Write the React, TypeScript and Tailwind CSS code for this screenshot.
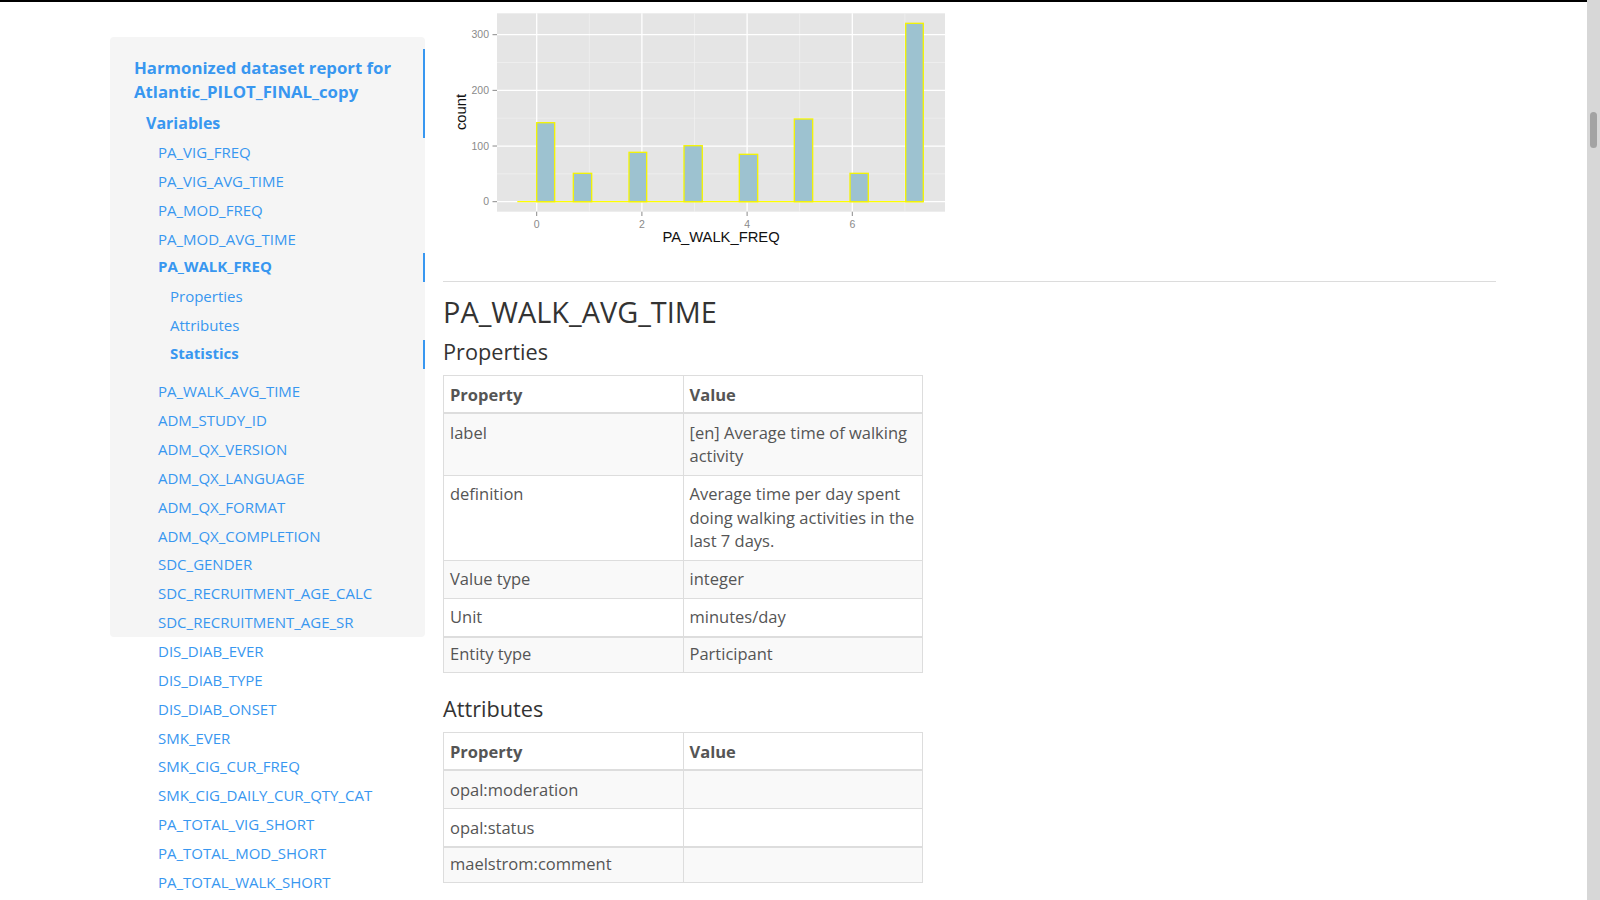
import React from "react";

const BLUE = "text-[#3897f0]";

const topItems = ["PA_VIG_FREQ", "PA_VIG_AVG_TIME", "PA_MOD_FREQ", "PA_MOD_AVG_TIME"];
const restItems = [
  "PA_WALK_AVG_TIME",
  "ADM_STUDY_ID",
  "ADM_QX_VERSION",
  "ADM_QX_LANGUAGE",
  "ADM_QX_FORMAT",
  "ADM_QX_COMPLETION",
  "SDC_GENDER",
  "SDC_RECRUITMENT_AGE_CALC",
  "SDC_RECRUITMENT_AGE_SR",
  "DIS_DIAB_EVER",
  "DIS_DIAB_TYPE",
  "DIS_DIAB_ONSET",
  "SMK_EVER",
  "SMK_CIG_CUR_FREQ",
  "SMK_CIG_DAILY_CUR_QTY_CAT",
  "PA_TOTAL_VIG_SHORT",
  "PA_TOTAL_MOD_SHORT",
  "PA_TOTAL_WALK_SHORT",
];

function NavRow({
  label,
  bold,
  active,
  indent,
  extra = "",
}: {
  label: string;
  bold?: boolean;
  active?: boolean;
  indent: string;
  extra?: string;
}) {
  return (
    <div
      className={`flex h-[28.85px] items-center text-[15px] ${BLUE} ${indent} ${bold ? "font-bold" : ""} ${
        active ? "border-r-2 border-[#3897f0]" : ""
      } ${extra}`}
    >
      {label}
    </div>
  );
}

function Sidebar() {
  return (
    <aside className="w-[315px] shrink-0 pt-[35px]">
      <div className="h-[600px] rounded-[4px] bg-[#f5f5f5] pt-[12px]">
        <div className="border-r-2 border-[#3897f0] pl-[24px] pt-[7px]">
          <div className={`text-[16.8px] font-bold leading-[24px] ${BLUE}`}>
            Harmonized dataset report for
            <br />
            Atlantic_PILOT_FINAL_copy
          </div>
          <div className={`mt-[4px] flex h-[30px] items-center pb-[1px] pl-[12px] text-[16px] font-bold ${BLUE}`}>
            Variables
          </div>
        </div>
        {topItems.map((t) => (
          <NavRow key={t} label={t} indent="pl-[48px]" />
        ))}
        <NavRow label="PA_WALK_FREQ" bold active indent="pl-[48px]" extra="pb-[3px]" />
        <div className="mb-[8.5px]">
          <NavRow label="Properties" indent="pl-[60px]" />
          <NavRow label="Attributes" indent="pl-[60px]" />
          <NavRow label="Statistics" bold active indent="pl-[60px]" extra="pb-[1.5px]" />
        </div>
        {restItems.map((t) => (
          <NavRow key={t} label={t} indent="pl-[48px]" />
        ))}
      </div>
    </aside>
  );
}

const yv = (v: number) => 201.7 - 0.5567 * v;
const xu = (u: number) => 536.7 + 52.6 * u;

const bars = [
  [536.7, 554.7, 122.7],
  [573.3, 591.7, 173.3],
  [629, 646.7, 152.3],
  [684, 702.3, 145.7],
  [739.3, 757.7, 154.3],
  [794.3, 812.7, 119],
  [850, 868.3, 173.3],
  [905.7, 923.3, 23.3],
];

const CHART_FONT = "'Liberation Sans', Arial, sans-serif";

function Chart() {
  return (
    <svg width={510} height={259} viewBox="443 2 510 259" className="block">
      <rect x={497} y={13.3} width={448} height={198.4} fill="#e5e5e5" />
      {[50, 150, 250].map((v) => (
        <line key={v} x1={497} x2={945} y1={yv(v)} y2={yv(v)} stroke="#f2f2f2" strokeWidth={0.7} />
      ))}
      {[1, 3, 5, 7].map((u) => (
        <line key={u} x1={xu(u)} x2={xu(u)} y1={13.3} y2={211.7} stroke="#f2f2f2" strokeWidth={0.7} />
      ))}
      {[0, 100, 200, 300].map((v) => (
        <line key={v} x1={497} x2={945} y1={yv(v)} y2={yv(v)} stroke="#ffffff" strokeWidth={1.3} />
      ))}
      {[0, 2, 4, 6].map((u) => (
        <line key={u} x1={xu(u)} x2={xu(u)} y1={13.3} y2={211.7} stroke="#ffffff" strokeWidth={1.3} />
      ))}
      <line x1={517.3} x2={923.3} y1={201.7} y2={201.7} stroke="#ffff00" strokeWidth={1.3} />
      {bars.map(([a, b, t], i) => (
        <rect key={i} x={a} y={t} width={b - a} height={201.7 - t} fill="#9dc2d0" stroke="#f4f400" strokeWidth={1.3} />
      ))}
      {[0, 100, 200, 300].map((v) => (
        <g key={v}>
          <line x1={492.5} x2={497} y1={yv(v)} y2={yv(v)} stroke="#8a8a8a" strokeWidth={1} />
          <text x={489} y={yv(v) + 3.7} textAnchor="end" fontSize={10.5} fill="#8a8a8a" fontFamily={CHART_FONT}>
            {v}
          </text>
        </g>
      ))}
      {[0, 2, 4, 6].map((u) => (
        <g key={u}>
          <line x1={xu(u)} x2={xu(u)} y1={211.7} y2={216} stroke="#8a8a8a" strokeWidth={1} />
          <text x={xu(u)} y={227.5} textAnchor="middle" fontSize={10.5} fill="#8a8a8a" fontFamily={CHART_FONT}>
            {u}
          </text>
        </g>
      ))}
      <text x={721} y={242} textAnchor="middle" fontSize={14.75} fill="#111" fontFamily={CHART_FONT}>
        PA_WALK_FREQ
      </text>
      <text
        x={466}
        y={112}
        textAnchor="middle"
        fontSize={14.75}
        fill="#111"
        fontFamily={CHART_FONT}
        transform="rotate(-90 466 112)"
      >
        count
      </text>
    </svg>
  );
}

function DataTable({ main, extra }: { main: [string, React.ReactNode][]; extra: [string, React.ReactNode][] }) {
  const td = "border border-[#ddd] px-[6px] align-top";
  return (
    <table className="w-[480px] table-fixed border-collapse border border-[#ddd] text-[16.5px] leading-[23.5px] text-[#555]">
      <thead>
        <tr>
          <th className="w-1/2 border border-b-2 border-[#ddd] px-[6px] pb-[5.25px] pt-[7.25px] text-left align-bottom font-bold">
            Property
          </th>
          <th className="w-1/2 border border-b-2 border-[#ddd] px-[6px] pb-[5.25px] pt-[7.25px] text-left align-bottom font-bold">
            Value
          </th>
        </tr>
      </thead>
      <tbody>
        {main.map(([k, v], i) => (
          <tr key={k} className={i % 2 === 0 ? "bg-[#f9f9f9]" : "bg-white"}>
            <td className={`${td} py-[6.75px]`}>{k}</td>
            <td className={`${td} py-[6.75px]`}>{v}</td>
          </tr>
        ))}
      </tbody>
      <tbody>
        {extra.map(([k, v], i) => (
          <tr key={k} className={i % 2 === 0 ? "bg-[#f9f9f9]" : "bg-white"}>
            <td className={`${td} ${i === 0 ? "border-t-2 pb-[6.25px] pt-[4.5px]" : "py-[6.75px]"}`}>{k}</td>
            <td className={`${td} ${i === 0 ? "border-t-2 pb-[6.25px] pt-[4.5px]" : "py-[6.75px]"}`}>{v}</td>
          </tr>
        ))}
      </tbody>
    </table>
  );
}

function Content() {
  return (
    <main className="ml-[18px] w-[1053px] shrink-0">
      <Chart />
      <hr className="mt-[20px] border-0 border-t border-[#dcdcdc]" />
      <h2 className="mt-[14.3px] text-[28.9px] font-normal leading-[31.35px] text-[#333]">PA_WALK_AVG_TIME</h2>
      <h3 className="mt-[12px] text-[21.7px] font-normal leading-[24.2px] text-[#333]">Properties</h3>
      <div className="mt-[11.4px]">
        <DataTable
          main={[
            ["label", "[en] Average time of walking activity"],
            ["definition", "Average time per day spent doing walking activities in the last 7 days."],
            ["Value type", "integer"],
            ["Unit", "minutes/day"],
          ]}
          extra={[["Entity type", "Participant"]]}
        />
      </div>
      <h3 className="mt-[24.4px] text-[21.7px] font-normal leading-[24.2px] text-[#333]">Attributes</h3>
      <div className="mt-[10.4px]">
        <DataTable
          main={[
            ["opal:moderation", ""],
            ["opal:status", ""],
          ]}
          extra={[["maelstrom:comment", ""]]}
        />
      </div>
    </main>
  );
}

export default function App() {
  return (
    <div
      className="flex h-[900px] w-[1600px] overflow-hidden bg-white"
      style={{ fontFamily: "'Open Sans', 'Noto Sans', sans-serif" }}
    >
      <div className="flex min-w-0 flex-1 flex-col">
        <div className="h-[2px] shrink-0 bg-black" />
        <div className="flex min-h-0 flex-1 pl-[110px]">
          <Sidebar />
          <Content />
        </div>
      </div>
      <div className="relative w-[13px] shrink-0 bg-[#d7d7d7]">
        <div className="absolute left-[3px] top-[112px] h-[36px] w-[7px] rounded-full bg-[#a3a3a3]" />
      </div>
    </div>
  );
}
